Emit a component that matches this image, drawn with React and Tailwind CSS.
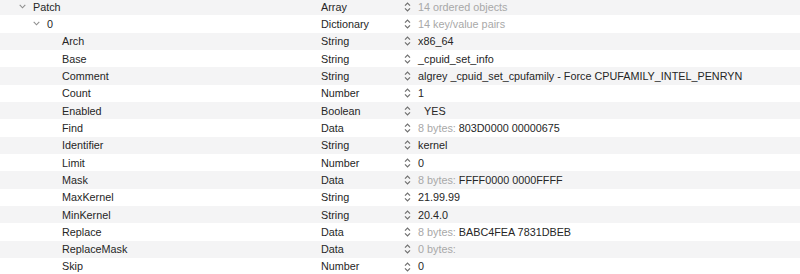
import React from 'react';

const rows = [
  { key: 'Patch', depth: 0, open: true, type: 'Array', hint: '14 ordered objects' },
  { key: '0', depth: 1, open: true, type: 'Dictionary', hint: '14 key/value pairs' },
  { key: 'Arch', depth: 2, type: 'String', value: 'x86_64' },
  { key: 'Base', depth: 2, type: 'String', value: '_cpuid_set_info' },
  { key: 'Comment', depth: 2, type: 'String', value: 'algrey _cpuid_set_cpufamily - Force CPUFAMILY_INTEL_PENRYN' },
  { key: 'Count', depth: 2, type: 'Number', value: '1' },
  { key: 'Enabled', depth: 2, type: 'Boolean', value: 'YES', bool: true },
  { key: 'Find', depth: 2, type: 'Data', hint: '8 bytes:', value: '803D0000 00000675' },
  { key: 'Identifier', depth: 2, type: 'String', value: 'kernel' },
  { key: 'Limit', depth: 2, type: 'Number', value: '0' },
  { key: 'Mask', depth: 2, type: 'Data', hint: '8 bytes:', value: 'FFFF0000 0000FFFF' },
  { key: 'MaxKernel', depth: 2, type: 'String', value: '21.99.99' },
  { key: 'MinKernel', depth: 2, type: 'String', value: '20.4.0' },
  { key: 'Replace', depth: 2, type: 'Data', hint: '8 bytes:', value: 'BABC4FEA 7831DBEB' },
  { key: 'ReplaceMask', depth: 2, type: 'Data', hint: '0 bytes:' },
  { key: 'Skip', depth: 2, type: 'Number', value: '0' },
];

const indent = ['pl-[19px]', 'pl-[33px]', 'pl-[62px]'];

function Chevron() {
  return (
    <svg width="7" height="5" viewBox="0 0 7 5" className="mr-[7px] shrink-0">
      <path d="M0.7 0.9 L3.5 3.8 L6.3 0.9" fill="none" stroke="#8e8e8e" strokeWidth="1.1" />
    </svg>
  );
}

function Stepper() {
  return (
    <svg width="7" height="10" viewBox="0 0 7 10" className="mr-[7px] shrink-0">
      <path d="M1 3.6 L3.5 1.1 L6 3.6 M1 6.4 L3.5 8.9 L6 6.4" fill="none" stroke="#6f6f6f" strokeWidth="1.2" />
    </svg>
  );
}

export default function App() {
  return (
    <div className="w-[800px] h-[274px] overflow-hidden bg-white text-[10.8px] text-[#262626]" style={{ fontFamily: '"Liberation Sans", Arial, sans-serif' }}>
      <div className="-mt-[2px]">
        {rows.map((r, i) => (
          <div key={i} className={`flex items-center h-[17.33px] ${i % 2 === 0 ? 'bg-[#f4f4f5]' : 'bg-white'}`}>
            <div className={`w-[321px] flex items-center ${indent[r.depth]}`}>
              {r.open && <Chevron />}
              <span>{r.key}</span>
            </div>
            <div className="w-[83px]">{r.type}</div>
            <div className="flex items-center">
              <Stepper />
              {r.hint && <span className="text-[#a8a8a8] mr-[3px]">{r.hint}</span>}
              {r.value && <span className={r.bool ? 'pl-[6px]' : ''}>{r.value}</span>}
            </div>
          </div>
        ))}
      </div>
    </div>
  );
}
